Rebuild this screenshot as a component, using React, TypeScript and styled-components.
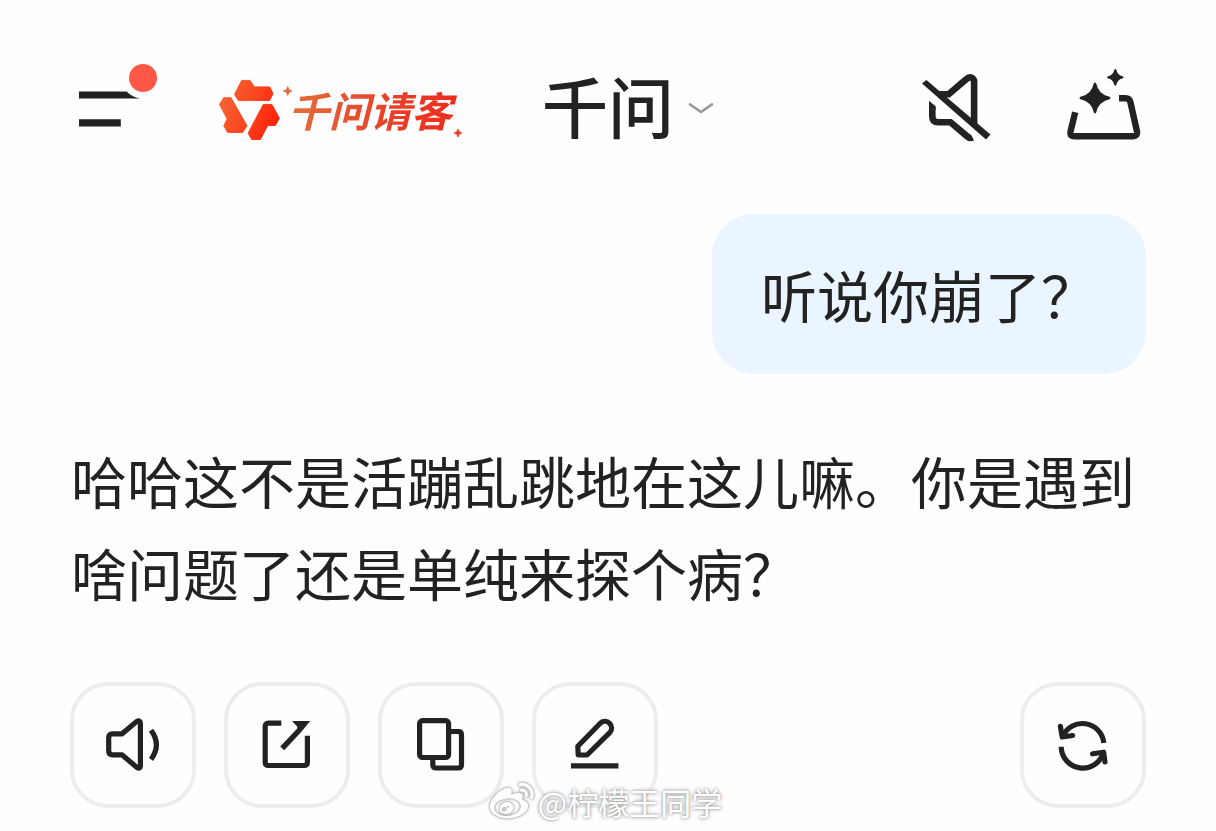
import React from "react";
import styled, { createGlobalStyle } from "styled-components";
import { FaWeibo } from "react-icons/fa";

const INK = "#222222";

const GlobalStyle = createGlobalStyle`
  *, *::before, *::after { box-sizing: border-box; }
  body {
    margin: 0;
    background: #fefefe;
    color: ${INK};
    font-family: "Noto Sans CJK SC", "Noto Sans", sans-serif;
  }
  svg { display: block; flex: none; }
`;

const Page = styled.div`
  min-height: 100vh;
  padding-bottom: 20px;
`;

const Header = styled.header`
  display: grid;
  grid-template-columns: 1fr auto 1fr;
  align-items: center;
  padding: 56px 72px 0;
`;

const HeaderGroup = styled.div<{ $end?: boolean; $gap: number }>`
  display: flex;
  align-items: center;
  justify-content: ${(p) => (p.$end ? "flex-end" : "flex-start")};
  gap: ${(p) => p.$gap}px;
`;

const PlainButton = styled.button`
  display: flex;
  align-items: center;
  padding: 0;
  border: 0;
  background: none;
  color: inherit;
  font: inherit;
  cursor: pointer;
`;

const PromoLink = styled.a`
  display: flex;
  align-items: center;
  text-decoration: none;
`;

const PromoText = styled.span`
  margin: 0 -6px 0 -4px;
  padding: 10px 8px 0 0;
  font-size: 41px;
  line-height: 64px;
  font-weight: 700;
  font-style: italic;
  white-space: nowrap;
  color: transparent;
  background: linear-gradient(90deg, #e2703c, #e8472c 50%, #ee2a1c);
  background-clip: text;
  -webkit-background-clip: text;
`;

const ModelButton = styled(PlainButton)`
  gap: 14px;
  padding-left: 40px;
`;

const Title = styled.h1`
  margin: 0;
  font-size: 66px;
  line-height: 96px;
  font-weight: 500;
  white-space: nowrap;
`;

const Conversation = styled.main`
  display: flex;
  flex-direction: column;
  gap: 60px;
  padding: 62px 70px 0;
`;

const UserBubble = styled.p`
  align-self: flex-end;
  margin: 0;
  padding: 34px 49px;
  border-radius: 42px;
  background: #eaf5ff;
  font-size: 56px;
  line-height: 92px;
`;

const Reply = styled.p`
  margin: 0;
  padding: 0 1px 4px;
  font-size: 56px;
  line-height: 92px;
`;

const Actions = styled.div`
  position: relative;
  display: flex;
  justify-content: space-between;
`;

const ActionGroup = styled.div`
  display: flex;
  gap: 28px;
`;

const ActionButton = styled(PlainButton)`
  justify-content: center;
  width: 126px;
  height: 126px;
  border: 4px solid #ededed;
  border-radius: 38px;
`;

const Watermark = styled.div`
  position: absolute;
  top: 96px;
  left: 50%;
  transform: translateX(-50%);
  display: flex;
  align-items: center;
  gap: 4px;
  padding-right: 4px;
  color: #ffffff;
  font-size: 31px;
  line-height: 48px;
  white-space: nowrap;
  text-shadow: 0 0 3px #999999, 0 0 4px #b0b0b0;
  pointer-events: none;

  svg { filter: drop-shadow(0 0 1px #999999) drop-shadow(0 0 1px #bbbbbb); }
`;

const MenuIcon = () => (
  <svg width="88" height="96" viewBox="0 0 88 96" fill={INK} aria-hidden="true">
    <path d="M7 35.4H54.7Q60 41 68 42.5H7Z" />
    <path d="M7 63.2H48.8V70.6H7Z" />
    <circle cx="71" cy="22" r="14" fill="#ff5847" />
  </svg>
);

const PromoMark = () => (
  <svg width="76" height="96" viewBox="0 0 76 96" aria-hidden="true">
    <defs>
      <linearGradient id="mark" x1="0" y1="34" x2="64" y2="60" gradientUnits="userSpaceOnUse">
        <stop offset="0" stopColor="#f46a3a" />
        <stop offset="0.5" stopColor="#f94a22" />
        <stop offset="1" stopColor="#ff2008" />
      </linearGradient>
    </defs>
    <g fill="url(#mark)" stroke="url(#mark)" strokeWidth="1" strokeLinejoin="round">
      <path d="M18.5 38.3 25.6 24.4H34L38.4 30.9H53.7L57 37.5 53.7 44.4H22.2Z" />
      <path d="M3.5 48.5 7.6 41.7H15L31 69.8 26.6 76.4H11.6L7.8 69.8 11.2 63Z" />
      <path d="M47.3 48.4H55.8L63.3 62.2 59.4 69.4H51.7L44.4 83.4H35.6L32.1 77.2Z" />
    </g>
    <path d="M71.7 30.5Q72.2 34.5 76 35Q72.2 35.5 71.7 39.5Q71.2 35.5 67.2 35Q71.2 34.5 71.7 30.5Z" fill="#e2683a" stroke="#e2683a" strokeWidth="0.8" />
  </svg>
);

const PromoSpark = () => (
  <svg width="8" height="96" viewBox="0 0 8 96" aria-hidden="true">
    <path d="M4 73Q4.6 76.4 8 77Q4.6 77.6 4 81Q3.4 77.6 0 77Q3.4 76.4 4 73Z" fill="#ee3a24" stroke="#ee3a24" strokeWidth="0.8" />
  </svg>
);

const Chevron = () => (
  <svg width="26" height="20" viewBox="0 0 26 20" fill="none" stroke="#999999" strokeWidth="2.6" aria-hidden="true">
    <path d="M2 10.4 13 18 24 10.4" strokeLinecap="round" strokeLinejoin="round" />
  </svg>
);

const MuteIcon = () => (
  <svg width="72" height="96" viewBox="0 0 72 96" fill="none" stroke={INK} strokeWidth="6.6" aria-hidden="true">
    <path d="M18 38.3H28.7L45.8 23.6Q49 20.6 51.8 21.8Q54.1 22.8 54.1 26V69" />
    <path d="M12.3 51V60.5Q12.3 66.3 18 66.3H30.5L47.5 80.6Q50.2 82.8 52.6 81.6" />
    <path d="M9 44.7 15.6 50.2V54H9Z" fill={INK} stroke="none" />
    <path d="M2 27.6 6.4 24 70.4 78.4 66 83.4Z" fill={INK} stroke="none" />
  </svg>
);

const NewChatIcon = () => (
  <svg width="80" height="96" viewBox="0 0 80 96" fill="none" stroke={INK} strokeWidth="6.4" aria-hidden="true">
    <path d="M11.2 56.3 6.5 75.5Q5.4 80.2 10 80.2H69Q74 80.2 73 75.5L66.4 46Q65.4 42.2 61.4 42.2H55" />
    <path
      d="M29.8 27.5Q31 25.5 32.2 27.5Q34.5 38.5 45.5 40.8Q47.5 42 45.5 43.2Q34.5 45.5 32.2 56.6Q31 58.6 29.8 56.6Q27.5 45.5 16.5 43.2Q14.5 42 16.5 40.8Q27.5 38.5 29.8 27.5Z"
      fill={INK}
      stroke="none"
    />
    <path
      d="M50.3 13.7Q51.3 12.2 52.3 13.7Q53.4 19.2 59 20.4Q60.3 21.3 59 22.2Q53.4 23.4 52.3 29Q51.3 30.4 50.3 29Q49.2 23.4 43.6 22.2Q42.3 21.3 43.6 20.4Q49.2 19.2 50.3 13.7Z"
      fill={INK}
      stroke="none"
    />
  </svg>
);

const ActionIcon = ({ children }: { children: React.ReactNode }) => (
  <svg width="60" height="60" viewBox="0 0 60 60" fill="none" stroke={INK} strokeWidth="5.2" aria-hidden="true">
    {children}
  </svg>
);

export default function App() {
  return (
    <Page lang="zh-CN">
      <GlobalStyle />
      <Header>
        <HeaderGroup $gap={56}>
          <PlainButton aria-label="菜单">
            <MenuIcon />
          </PlainButton>
          <PromoLink href="#promo">
            <PromoMark />
            <PromoText>千问请客</PromoText>
            <PromoSpark />
          </PromoLink>
        </HeaderGroup>
        <ModelButton>
          <Title>千问</Title>
          <Chevron />
        </ModelButton>
        <HeaderGroup $end $gap={72}>
          <PlainButton aria-label="静音">
            <MuteIcon />
          </PlainButton>
          <PlainButton aria-label="新对话">
            <NewChatIcon />
          </PlainButton>
        </HeaderGroup>
      </Header>

      <Conversation>
        <UserBubble>听说你崩了？</UserBubble>
        <Reply>哈哈这不是活蹦乱跳地在这儿嘛。你是遇到啥问题了还是单纯来探个病？</Reply>
        <Actions>
          <ActionGroup>
            <ActionButton aria-label="朗读">
              <ActionIcon>
                <path d="M9.7 18.8H19L33.6 6.6Q37.4 4.4 37.4 8.5V50.5Q37.4 54.6 33.6 52.2L19 39.8H9.7Q5.7 39.8 5.7 35.8V22.8Q5.7 18.8 9.7 18.8Z" />
                <path d="M48 15.2Q58.8 29.7 48 44.4" />
              </ActionIcon>
            </ActionButton>
            <ActionButton aria-label="分享">
              <ActionIcon>
                <path d="M24.3 8.2H11.4Q8.2 8.2 8.2 11.4V47.3Q8.2 50.5 11.4 50.5H47.2Q50.4 50.5 50.4 47.3V20.7" />
                <path d="M23.2 31.6 27.2 35.2 44 17.2 53.2 6H35L40.2 11.6V13.6Z" fill={INK} stroke="none" />
              </ActionIcon>
            </ActionButton>
            <ActionButton aria-label="复制">
              <ActionIcon>
                <rect x="8.6" y="5.7" width="29" height="36.8" rx="3" />
                <path d="M38 16.5H47.3Q50.5 16.5 50.5 19.7V49.8Q50.5 53 47.3 53H25Q21.8 53 21.8 49.8V43" />
              </ActionIcon>
            </ActionButton>
            <ActionButton aria-label="编辑">
              <ActionIcon>
                <path d="M35.5 8 12.8 31.2 13.2 39.9 22 40 45 17.4A6.7 6.7 0 0 0 35.5 8Z" strokeLinejoin="round" />
                <path d="M6 50.8H53.4" />
              </ActionIcon>
            </ActionButton>
          </ActionGroup>
          <ActionButton aria-label="重新生成">
            <ActionIcon>
              <path d="M50.8 28A21.5 21.5 0 0 0 9.6 21.6" />
              <path d="M8.2 31.7A21.5 21.5 0 0 0 50.4 37.4" />
              <path d="M7.4 11.4 9.2 22 19.6 20.5M39.6 38.8 50.6 37.2 52 47" strokeLinecap="round" strokeLinejoin="round" />
            </ActionIcon>
          </ActionButton>
          <Watermark>
            <FaWeibo size={44} />
            <span>@柠檬王同学</span>
          </Watermark>
        </Actions>
      </Conversation>
    </Page>
  );
}
